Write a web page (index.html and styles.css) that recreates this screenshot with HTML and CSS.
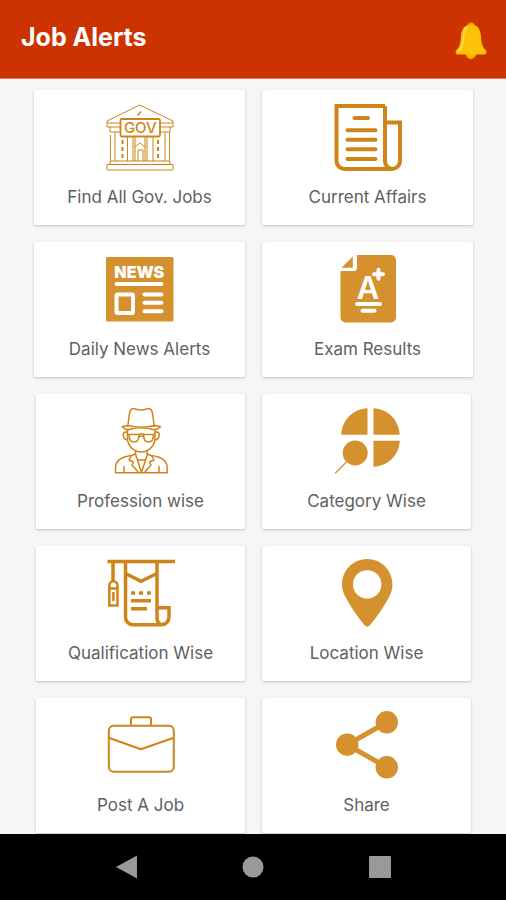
FILE: index.html
```html
<!DOCTYPE html>
<html lang="en">
<head>
    <meta charset="UTF-8">
    <meta name="viewport" content="width=device-width, initial-scale=1.0">
    <title>Job Alerts</title>
    <link rel="stylesheet" href="styles.css">
</head>
<body>
    <header class="topbar">
        <h1 class="title">Job Alerts</h1>
        <button class="bell" type="button" aria-label="Notifications">
            <svg width="32" height="38" viewBox="0 0 32 38">
                <circle cx="16" cy="4" r="3.5" fill="#f5a000"/>
                <circle cx="16" cy="32" r="5" fill="#ffb300"/>
                <path d="M16 2.5C9 2.5 6.500 8 6 14c-.5 8-1.500 11-4.500 14-1.500 2-1 4.500 1.500 4.500h26c2.500 0 3-2.500 1.500-4.500-3-3-4-6-4.500-14-.5-6-3-11.500-10-11.500z" fill="#ffc107"/>
                <path d="M12 5C8.500 8 8.500 14 8 19c-.5 5-2 8-4 10" fill="none" stroke="#ffd54f" stroke-width="2" stroke-linecap="round"/>
            </svg>
        </button>
    </header>

    <main class="content">
        <div class="cards">
            <a class="card" href="#gov">
                <svg class="icon thin" viewBox="0 0 68 68">
                    <path d="M14 19H1V17L33.7 1 67 17v2H54M1 19v4h13M67 19v4H54M4 23v5h10M64 23v5H54"/>
                    <path d="M31.500 11.500l3.500-4" stroke-width="1.500"/>
                    <rect x="14.500" y="15" width="39.500" height="17.500" rx="1.500" stroke-width="1.800"/>
                    <path d="M4.500 31v26M9 28v29M21.500 33v24M27 33v24M41 33v24M47 33v24M59 28v29M63.500 28v29M29 57V33M39 57V33M29 43l5-4 5 4M32 57V46h5v11"/>
                    <path d="M16.500 36v19M52 36v19" stroke-width="2" stroke-dasharray="4 3"/>
                    <path d="M4 57h60v3.500H4zM1 60.500h66V66H1z"/>
                    <text class="gov" x="34.300" y="29">GOV</text>
                </svg>
                <span class="label">Find All Gov. Jobs</span>
            </a>
            <a class="card" href="#affairs">
                <svg class="icon thick" viewBox="0 0 68 68">
                    <path d="M51 2H2.500v55a8 8 0 0 0 8 8H58a8 8 0 0 0 8-8V18.500H51M51 2v55a7 8 0 0 0 7 8"/>
                    <path d="M20.500 14H34M13.500 26.300h28M13.500 35.700h28M13.500 45.300h28M13.500 55h28" stroke-linecap="round"/>
                </svg>
                <span class="label">Current Affairs</span>
            </a>
            <a class="card" href="#news">
                <svg class="icon solid" viewBox="0 0 68 68">
                    <rect x="0" y="1" width="67.500" height="64.500" rx="1.500"/>
                    <text class="news" x="33.300" y="21.500">NEWS</text>
                    <path class="cut" d="M10.500 28h45M38.500 38.500h17M38.500 46.800h17M38.500 55.300h17"/>
                    <rect class="cut" x="10.500" y="38.500" width="16.500" height="18.500" rx="1"/>
                </svg>
                <span class="label">Daily News Alerts</span>
            </a>
            <a class="card" href="#results">
                <svg class="icon solid" viewBox="0 0 68 68">
                    <path d="M23-1H57a5 5 0 0 1 5 5V61a5 5 0 0 1-5 5.500H11.500a5 5 0 0 1-5-5V15H19.500a3.500 3.500 0 0 0 3.500-3.500z"/>
                    <path d="M7.500 11.700 18.800.5v11.200z"/>
                    <text class="grade" x="34" y="42.500">A</text>
                    <path class="cut" d="M44.500 13.800v9M40 18.300h9M23 48h23M28.500 54.700h12"/>
                </svg>
                <span class="label">Exam Results</span>
            </a>
        </div>

        <div class="cards inset">
            <a class="card" href="#profession">
                <svg class="icon line" viewBox="0 0 68 68">
                    <path d="M20.500 19c1.500-6 1-11 2.500-15.500 1-3 3-3.500 5.500-2.500 3.500 1.300 7.500 1.300 11 0 2.500-1 4.500-.5 5.500 2.500 1.500 4.500 1 9.500 2.500 15.500"/>
                    <path d="M20.500 17.500 15 18.700c3 3 6 3.300 9 2.300 6-1.500 14-1.500 20 0 3 1 6.500.7 9.500-2.300L48 17.500c-8 2-19 2-27.500 0"/>
                    <path d="M20.500 21v9c0 7.500 6 14 13.700 14S48 37.500 48 30v-9M20.500 24c-4-.5-5 1.500-4 4.500.7 2.500 2 3.500 4.500 3.500M48 24c4-.5 5 1.500 4 4.500-.7 2.500-2 3.500-4.500 3.500"/>
                    <path d="M21 26.500h10.500c2-.8 4-.8 5.500 0h10.500M31.500 29c2-1.300 4-1.300 5.500 0"/>
                    <path d="M22 26.500c0 5 2 7.500 5 7.500s5-3 5-7.500M36.500 26.500c0 5 2 7.500 5 7.500s5-3 5-7.500"/>
                    <path d="M28.500 42.500V46l-4 1.500C16 48.500 8.500 52 8.500 60v4.700h51.700V60c0-8-7.500-11.500-16-12.500l-4-1.500v-3.500"/>
                    <path d="M24.500 47.500 22 52l4.500 2-1.500 3 6.500 7.500M44.500 47.500l2.500 4.500-4.500 2 1.500 3-6.500 7.500M28.500 46l6 18.500 6-18.500M31 52h7M17 58v6.500M52 58v6.500"/>
                </svg>
                <span class="label">Profession wise</span>
            </a>
            <a class="card" href="#category">
                <svg class="icon solid" viewBox="0 0 68 68">
                    <path d="M34.500.3v26.500H8.200C9 12 20 1 34.500.3zM40.500.3C55 1 66 12 66.800 26.800H40.500zM40.500 32.700h26.300C66 47.500 55 58 40.500 58.700z"/>
                    <circle cx="22.200" cy="45" r="12.500"/>
                    <path d="M13.500 54 2.200 65.300" stroke="#d4912e" stroke-width="1.300"/>
                </svg>
                <span class="label">Category Wise</span>
            </a>
            <a class="card" href="#qualification">
                <svg class="icon thick" viewBox="0 0 68 68">
                    <g stroke-width="3.500">
                        <path d="M.5 1.500H68M6 2v19M18.500 2v55a7.500 7.500 0 0 0 7.500 7.700h28.500A7.500 7.500 0 0 0 62 57V47.800H50M50 2v55a7 7.500 0 0 0 4.500 7.700M18.500 13.500l15.500 7.800 16-7.800"/>
                        <path d="M24 40.700h20M24 48.700h16"/>
                        <path d="M24 33h4M32 33h4M40 33h4"/>
                    </g>
                    <path d="M2.300 45.500V26C2.300 19.500 10.500 19.500 10.500 26v19.500zM2.300 28.500h8.200M6.400 32v9" stroke-width="2.500"/>
                </svg>
                <span class="label">Qualification Wise</span>
            </a>
            <a class="card" href="#location">
                <svg class="icon solid" viewBox="0 0 68 68">
                    <path fill-rule="evenodd" d="M34.200-1C20-1 9 10.500 9 24.500c0 5 1.500 9 4 13.500 5.500 10 11 18.500 18.500 27 2 2.200 3.500 2.200 5.500 0C44.500 56.500 50 48 55.500 38c2.500-4.500 4-8.500 4-13.500C59.500 10.500 48.500-1 34.200-1zM34.200 10.200a14.200 14.200 0 1 1 0 28.400 14.200 14.200 0 0 1 0-28.400z"/>
                </svg>
                <span class="label">Location Wise</span>
            </a>
            <a class="card" href="#post">
                <svg class="icon line" viewBox="0 0 68 68">
                    <g stroke-width="2">
                        <rect x="1.800" y="13.700" width="65" height="46" rx="5"/>
                        <path d="M24 13.700V7.300a2 2 0 0 1 2-2h16a2 2 0 0 1 2 2v6.400M1.800 25.700l32 11.600 33-11.600"/>
                    </g>
                </svg>
                <span class="label">Post A Job</span>
            </a>
            <a class="card" href="#share">
                <svg class="icon solid" viewBox="0 0 68 68">
                    <path d="M53.800 10.300 14.200 32.700l39.600 22.600" fill="none" stroke="#d4912e" stroke-width="5"/>
                    <circle cx="14.200" cy="32.700" r="11.200"/>
                    <circle cx="53.800" cy="10.300" r="11.200"/>
                    <circle cx="53.800" cy="55.300" r="11.200"/>
                </svg>
                <span class="label">Share</span>
            </a>
        </div>
    </main>

    <nav class="navbar">
        <button type="button" aria-label="Back">
            <svg width="24" height="24" viewBox="0 0 24 24"><path d="M1 12 22 .5v23z"/></svg>
        </button>
        <button type="button" aria-label="Home">
            <svg width="24" height="24" viewBox="0 0 24 24"><circle cx="12" cy="12" r="10.500"/></svg>
        </button>
        <button type="button" aria-label="Recent apps">
            <svg width="24" height="24" viewBox="0 0 24 24"><rect x="1" y="1" width="22" height="22" rx="1"/></svg>
        </button>
    </nav>
</body>
</html>
```

FILE: styles.css
```css
* {
    box-sizing: border-box;
}

body {
    margin: 0;
    min-height: 100vh;
    display: flex;
    flex-direction: column;
    background-color: #f6f6f6;
    font-family: Inter, "Open Sans", sans-serif;
    color: #5f5f5f;
}

button {
    padding: 0;
    border: 0;
    background: none;
    cursor: pointer;
}

svg {
    display: block;
}

.topbar {
    display: flex;
    justify-content: space-between;
    align-items: center;
    padding: 18px 19px 18px 21px;
    border-bottom: 1px solid #dd7a5c;
    background-color: #cc3300;
}

.title {
    margin: 0;
    padding-bottom: 4px;
    font-size: 25px;
    line-height: 32px;
    font-weight: 700;
    color: #fff;
}

.bell {
    padding: 4px 0 0;
}

/* card menu */
.content {
    flex: 1;
    padding-top: 11px;
}

.cards {
    display: grid;
    grid-template-columns: 1fr 1fr;
    gap: 17px;
    padding: 0 33px 0 34px;
}

.cards.inset {
    padding: 17px 35px 0 36px;
}

.card {
    display: flex;
    flex-direction: column;
    align-items: center;
    gap: 13px;
    padding: 14px 8px 16px;
    border-radius: 2px;
    background-color: #fff;
    box-shadow: 0 1px 3px rgba(0, 0, 0, 0.22);
    color: inherit;
    text-decoration: none;
}

.label {
    font-size: 17px;
    line-height: 24px;
    text-align: center;
}

.icon {
    width: 68px;
    height: 68px;
    overflow: visible;
}

.thin,
.line,
.thick {
    fill: none;
    stroke: #cf8417;
    stroke-linejoin: round;
}

.thin {
    stroke-width: 1;
}

.line {
    stroke-width: 1.5;
}

.thick {
    stroke-width: 4;
    stroke-linejoin: miter;
}

.solid {
    fill: #d4912e;
}

.solid .cut {
    fill: none;
    stroke: #fff;
    stroke-width: 4;
    stroke-linecap: round;
}

.icon text {
    stroke: none;
    text-anchor: middle;
}

.icon .gov {
    fill: #cf8417;
    font-size: 15px;
    font-weight: 500;
}

.icon .news {
    fill: #fff;
    font-size: 16px;
    font-weight: 900;
}

.icon .grade {
    fill: #fff;
    font-size: 31px;
    font-weight: 600;
}

/* system buttons */
.navbar {
    position: sticky;
    bottom: 0;
    display: flex;
    justify-content: center;
    background-color: #000;
}

.navbar button {
    width: 25%;
    padding: 21px 0;
}

.navbar svg {
    margin: 0 auto;
    fill: #999;
}
```
